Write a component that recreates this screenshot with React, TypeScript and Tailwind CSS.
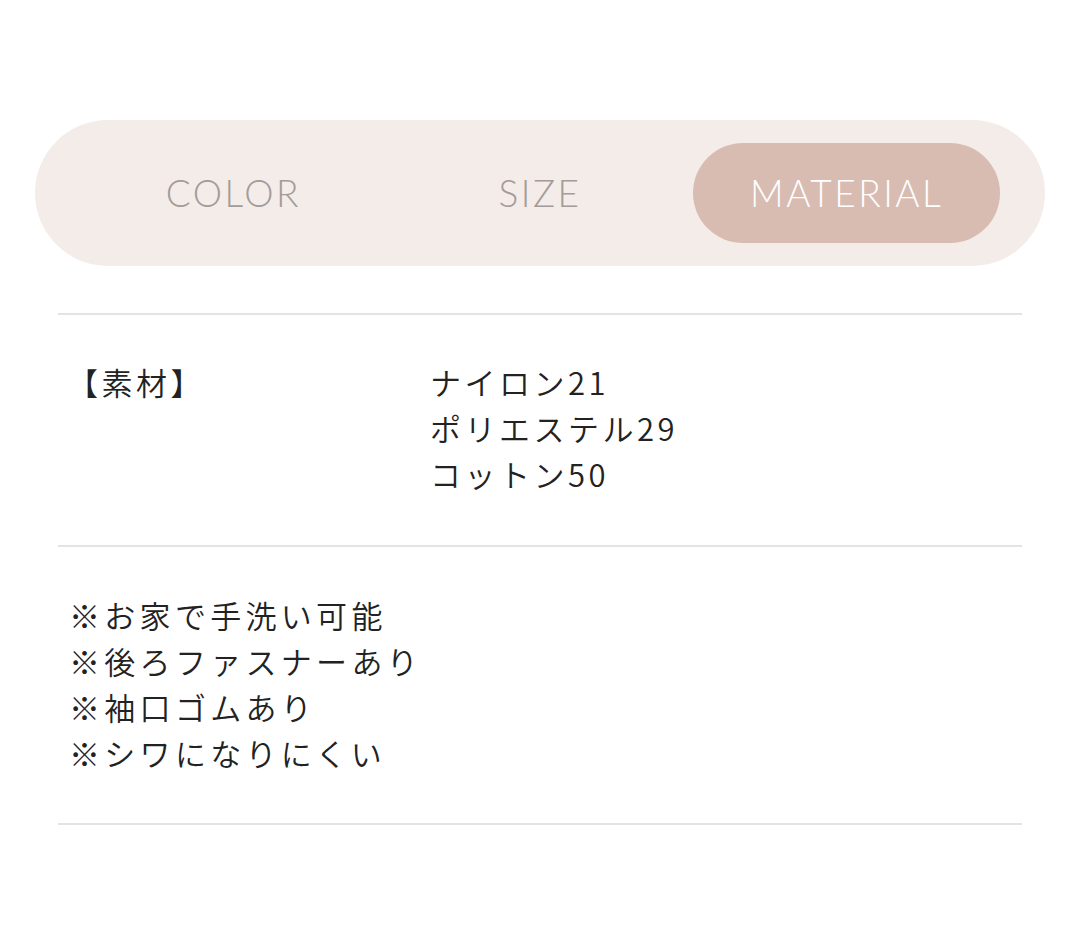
const tabs = ["COLOR", "SIZE", "MATERIAL"];
const active = "MATERIAL";

const notes = [
  "※お家で手洗い可能",
  "※後ろファスナーあり",
  "※袖口ゴムあり",
  "※シワになりにくい",
];

export default function App() {
  return (
    <div className="w-[1080px] h-[932px] bg-white pt-[120px]">
      {/* tab switcher */}
      <div className="mx-[35px] h-[146px] rounded-full bg-[#f3ece8] px-[45px] py-[23px] flex">
        {tabs.map((t) => (
          <div
            key={t}
            className={
              "flex-1 flex items-center justify-center rounded-full font-['Lato',sans-serif] font-light text-[37px] tracking-[2.5px] " +
              (t === active ? "bg-[#d8bcb2] text-white" : "text-[#a39b9a]")
            }
          >
            {t}
          </div>
        ))}
      </div>

      <div className="mx-[58px] mt-[47px] font-['Noto_Sans_CJK_JP',sans-serif] font-[350] text-[#222222] text-[31px] leading-[46px]">
        <div className="border-t-2 border-[#e3e3e3] pt-[44px] pb-[48px] pl-[9px] flex tracking-[3.5px]">
          <div className="w-[363px]">【素材】</div>
          <div>
            <div>ナイロン21</div>
            <div>ポリエステル29</div>
            <div>コットン50</div>
          </div>
        </div>
        <div className="border-t-2 border-b-2 border-[#e3e3e3] pt-[45px] pb-[47px] pl-[11px] tracking-[4.3px]">
          {notes.map((n) => (
            <div key={n}>{n}</div>
          ))}
        </div>
      </div>
    </div>
  );
}
